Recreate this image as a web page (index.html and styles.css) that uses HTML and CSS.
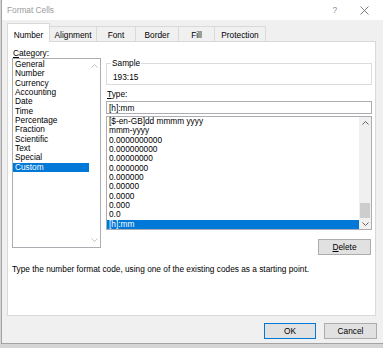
FILE: index.html
```html
<!DOCTYPE html>
<html lang="en">
<head>
    <meta charset="UTF-8">
    <title>Format Cells</title>
    <link rel="stylesheet" href="styles.css">
</head>
<body>

    <div class="window">
        <div class="titlebar">
            <span class="title">Format Cells</span>
            <span class="help">?</span>
            <svg class="close" width="9" height="9" viewBox="0 0 9 9">
                <path d="M0.5 0.5 L8.5 8.5 M8.5 0.5 L0.5 8.5" stroke="#6e6e6e" stroke-width="0.9" fill="none"/>
            </svg>
        </div>

        <div class="tabs">
            <div class="tab tab-number active">Number</div>
            <div class="tab tab-alignment">Alignment</div>
            <div class="tab tab-font">Font</div>
            <div class="tab tab-border">Border</div>
            <div class="tab tab-fill">Fill</div>
            <div class="tab tab-protection">Protection</div>
        </div>

        <div class="panel">
            <div class="columns">
                <div class="left">
                    <div class="label"><u>C</u>ategory:</div>
                    <div class="listbox category">
                        <div class="items">
                            <div class="item">General</div>
                            <div class="item">Number</div>
                            <div class="item">Currency</div>
                            <div class="item">Accounting</div>
                            <div class="item">Date</div>
                            <div class="item">Time</div>
                            <div class="item">Percentage</div>
                            <div class="item">Fraction</div>
                            <div class="item">Scientific</div>
                            <div class="item">Text</div>
                            <div class="item">Special</div>
                            <div class="item selected">Custom</div>
                        </div>
                        <div class="scrollbar disabled">
                            <div class="arrow">
                                <svg width="7" height="4" viewBox="0 0 7 4"><polyline points="0.5,3.5 3.5,0.5 6.5,3.5" fill="none" stroke="#c2c2c2" stroke-width="1"/></svg>
                            </div>
                            <div class="track"></div>
                            <div class="arrow">
                                <svg width="7" height="4" viewBox="0 0 7 4"><polyline points="0.5,0.5 3.5,3.5 6.5,0.5" fill="none" stroke="#c2c2c2" stroke-width="1"/></svg>
                            </div>
                        </div>
                    </div>
                </div>

                <div class="right">
                    <div class="sample">
                        <span class="legend">Sample</span>
                        <div class="sample-value">193:15</div>
                    </div>
                    <div class="label type-label"><u>T</u>ype:</div>
                    <div class="input">[h]:mm</div>
                    <div class="listbox types">
                        <div class="items">
                            <div class="item">[$-en-GB]dd mmmm yyyy</div>
                            <div class="item">mmm-yyyy</div>
                            <div class="item">0.0000000000</div>
                            <div class="item">0.000000000</div>
                            <div class="item">0.00000000</div>
                            <div class="item">0.0000000</div>
                            <div class="item">0.000000</div>
                            <div class="item">0.00000</div>
                            <div class="item">0.0000</div>
                            <div class="item">0.000</div>
                            <div class="item">0.0</div>
                            <div class="item selected">[h]:mm</div>
                        </div>
                        <div class="scrollbar">
                            <div class="arrow">
                                <svg width="7" height="4" viewBox="0 0 7 4"><polyline points="0.5,3.5 3.5,0.5 6.5,3.5" fill="none" stroke="#606060" stroke-width="1"/></svg>
                            </div>
                            <div class="track"><div class="thumb"></div></div>
                            <div class="arrow">
                                <svg width="7" height="4" viewBox="0 0 7 4"><polyline points="0.5,0.5 3.5,3.5 6.5,0.5" fill="none" stroke="#606060" stroke-width="1"/></svg>
                            </div>
                        </div>
                    </div>
                    <button class="btn delete"><u>D</u>elete</button>
                </div>
            </div>

            <p class="hint">Type the number format code, using one of the existing codes as a starting point.</p>
        </div>

        <div class="footer">
            <button class="btn ok">OK</button>
            <button class="btn cancel">Cancel</button>
        </div>
    </div>

</body>
</html>
```

FILE: styles.css
```css
* {
    margin: 0;
    padding: 0;
    box-sizing: border-box;
}
body {
    background-color: #d5d5d5;
    font-family: "Liberation Sans", Arial, sans-serif;
    font-size: 8.3px;
    color: #000;
    padding-left: 1px;
    height: 348px;
    overflow: hidden;
}
u {
    text-decoration: underline;
    text-underline-offset: 1px;
}
.window {
    height: 344px;
    background: #f0f0f0;
    border-left: 1px solid #a3a3a3;
    border-bottom: 1px solid #a3a3a3;
}

/* title bar */
.titlebar {
    height: 20px;
    background: #fff;
    display: flex;
    align-items: center;
    padding-left: 5px;
}
.title {
    flex: 1;
    color: #9a9a9a;
    font-size: 8.3px;
}
.help {
    color: #8c8c8c;
    margin-right: 23px;
}
.close {
    margin-right: 14px;
}

/* tabs */
.tabs {
    height: 21px;
    display: flex;
    align-items: flex-end;
    padding-left: 5px;
}
.tab {
    height: 15px;
    padding-top: 3px;
    line-height: 10px;
    text-align: center;
    border: 1px solid #d9d9d9;
    border-bottom: none;
    margin-right: -1px;
    background: #f0f0f0;
}
.tab.active {
    height: 19px;
    padding-top: 6px;
    background: #fff;
    margin-bottom: -1px;
    position: relative;
    z-index: 1;
}
.tab-number { width: 43px; }
.tab-alignment { width: 48px; }
.tab-font { width: 40px; }
.tab-border { width: 44px; }
.tab-fill { width: 37px; }
.tab-protection { width: 52px; }

/* panel */
.panel {
    height: 275px;
    margin: 0 7px 0 5px;
    background: #fff;
    border: 1px solid #d9d9d9;
}
.columns {
    display: flex;
    gap: 5px;
    padding: 6px 3px 0 4px;
}
.left {
    width: 89px;
}
.right {
    flex: 1;
    display: flex;
    flex-direction: column;
}
.label {
    height: 10px;
    line-height: 10px;
    padding-left: 1px;
}
.listbox {
    display: flex;
    border: 1px solid #abadb3;
    background: #fff;
}
.listbox.category {
    height: 190px;
}
.listbox.types {
    height: 114px;
    margin-top: 2px;
}
.items {
    flex: 1;
    min-width: 0;
}
.category .items {
    padding-top: 1px;
}
.item {
    height: 9.33px;
    line-height: 9.33px;
    padding-left: 2px;
    white-space: nowrap;
}
.item.selected {
    background: #0078d7;
    color: #fff;
}
.scrollbar {
    width: 12px;
    display: flex;
    flex-direction: column;
    background: #f0f0f0;
}
.scrollbar.disabled {
    width: 11px;
    background: #fff;
}
.arrow {
    height: 11px;
    display: flex;
    align-items: center;
    justify-content: center;
}
.disabled .arrow {
    height: 14px;
}
.track {
    flex: 1;
    display: flex;
    flex-direction: column;
    justify-content: flex-end;
    padding: 0 1px;
}
.thumb {
    height: 15px;
    background: #cdcdcd;
}

/* sample box */
.sample {
    position: relative;
    height: 22px;
    margin-top: 15px;
    border: 1px solid #dcdcdc;
    padding: 9px 6px 0;
}
.legend {
    position: absolute;
    top: -5px;
    left: 4px;
    padding: 0 1px;
    background: #fff;
    line-height: 9.33px;
}
.sample-value {
    line-height: 9.33px;
}
.type-label {
    margin-top: 4px;
}
.input {
    height: 13px;
    margin-top: 2px;
    border: 1px solid #abadb3;
    padding-left: 2px;
    line-height: 12px;
}

/* buttons */
.btn {
    height: 16px;
    background: #e1e1e1;
    border: 1px solid #adadad;
    font-family: "Liberation Sans", Arial, sans-serif;
    font-size: 8.3px;
    color: #000;
    line-height: 12px;
}
.delete {
    width: 53px;
    margin-top: 9px;
    margin-right: 1px;
    align-self: flex-end;
}
.hint {
    margin-top: 9px;
    padding-left: 4px;
    line-height: 10px;
}
.footer {
    display: flex;
    justify-content: flex-end;
    gap: 8px;
    padding: 7px 6px 0 0;
}
.ok {
    width: 52px;
    border-color: #0078d7;
}
.cancel {
    width: 53px;
}
```
